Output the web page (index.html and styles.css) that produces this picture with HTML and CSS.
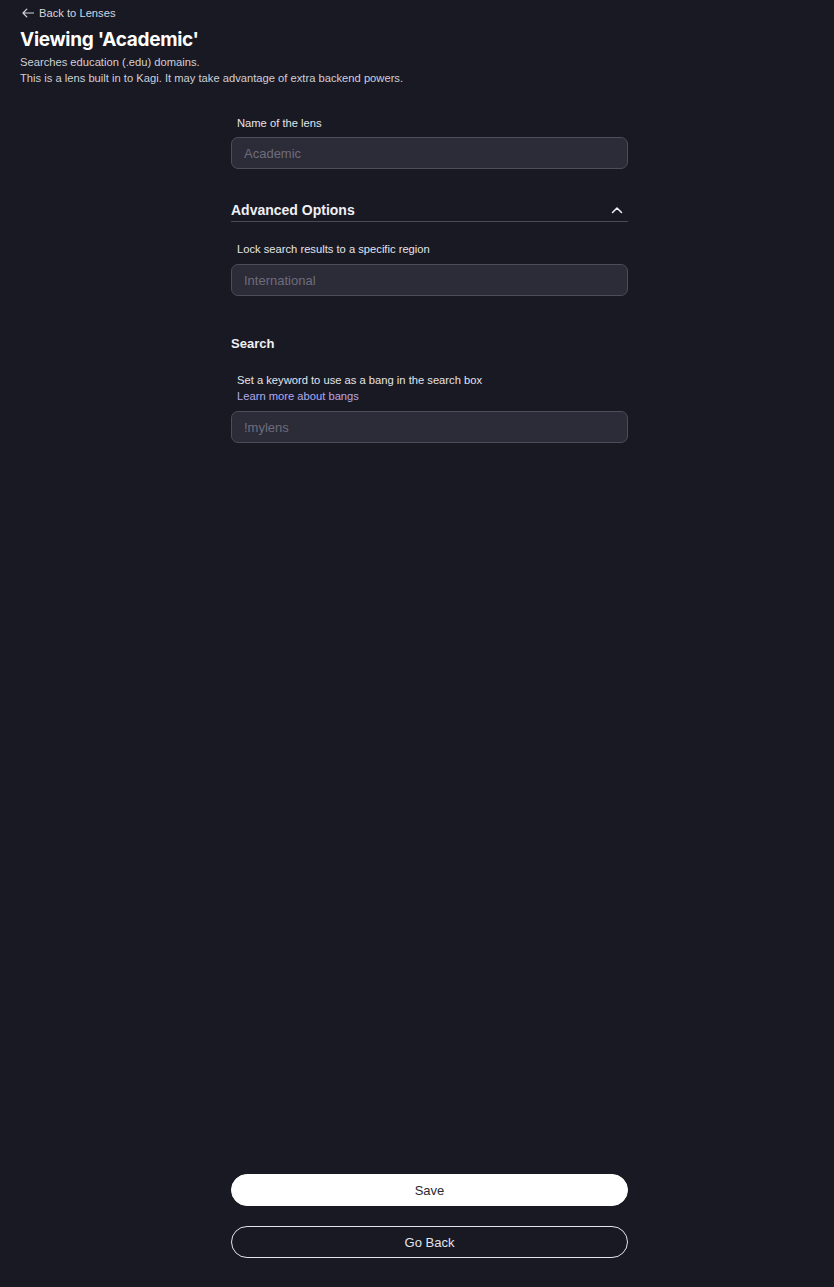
FILE: index.html
```html
<!DOCTYPE html>
<html>
<head>
    <meta charset="utf-8">
    <title>Viewing 'Academic'</title>
    <link rel="stylesheet" href="styles.css">
</head>
<body>
    <div class="page">
        <header class="top">
            <a class="back" href="#">
                <svg width="12" height="10" viewBox="0 0 12 10"><path d="M11.5 5H1M4.8 1.2L1 5L4.8 8.8" fill="none" stroke="#d6d6de" stroke-width="1.2" stroke-linecap="round" stroke-linejoin="round"/></svg>
                Back to Lenses
            </a>
            <h1 class="title">Viewing 'Academic'</h1>
            <p class="desc">Searches education (.edu) domains.</p>
            <p class="desc">This is a lens built in to Kagi. It may take advantage of extra backend powers.</p>
        </header>
        <form class="form">
            <section class="field">
                <label class="field_label">Name of the lens</label>
                <input class="field_input" type="text" placeholder="Academic">
            </section>
            <section class="group">
                <div class="group_head">
                    <span>Advanced Options</span>
                    <svg width="12" height="8" viewBox="0 0 12 8"><path d="M1.5 6.5L6 2L10.5 6.5" fill="none" stroke="#f0f0f4" stroke-width="1.5" stroke-linecap="round" stroke-linejoin="round"/></svg>
                </div>
                <div class="field">
                    <label class="field_label">Lock search results to a specific region</label>
                    <input class="field_input" type="text" placeholder="International">
                </div>
            </section>
            <section class="group">
                <h2 class="group_title">Search</h2>
                <div class="field">
                    <label class="field_label">Set a keyword to use as a bang in the search box<br><a class="link" href="#">Learn more about bangs</a></label>
                    <input class="field_input" type="text" placeholder="!mylens">
                </div>
            </section>
            <div class="actions">
                <button type="button" class="btn btn_save">Save</button>
                <button type="button" class="btn btn_back">Go Back</button>
            </div>
        </form>
    </div>
</body>
</html>
```

FILE: styles.css
```css
*{
    box-sizing: border-box;
    padding: 0;
    margin: 0;
}
body{
    background: #191923;
    color: #e4e4ea;
    font-family: "Liberation Sans", Arial, sans-serif;
}
.page{
    display: flex;
    flex-direction: column;
    min-height: 100vh;
}
.top{
    padding: 5px 20px 0;
}
.back{
    display: flex;
    align-items: center;
    gap: 5px;
    font-size: 11.2px;
    line-height: 16px;
    color: #d6d6de;
    text-decoration: none;
    padding-left: 2px;
}
.title{
    font-family: Inter, "Noto Sans", sans-serif;
    font-size: 19px;
    font-weight: 700;
    letter-spacing: -0.3px;
    line-height: 24px;
    margin: 7px 0 2px;
    color: #ffffff;
}
.desc{
    font-size: 11.2px;
    line-height: 16px;
    color: #cfcfd7;
}
.form{
    flex: 1;
    display: flex;
    flex-direction: column;
    width: 397px;
    margin: 29px 0 0 231px;
}
.field{
    display: flex;
    flex-direction: column;
    gap: 6px;
}
.group .field{
    gap: 7px;
}
.field_label{
    font-size: 11.2px;
    line-height: 16px;
    padding-left: 6px;
    color: #e4e4ea;
}
.field_input{
    height: 32px;
    background: #2c2b38;
    border: 1px solid #4d4c5a;
    border-radius: 7px;
    padding: 0 12px;
    font-family: "Liberation Sans", Arial, sans-serif;
    font-size: 13px;
    color: #e4e4ea;
    outline: none;
}
.field_input::placeholder{
    color: #6e6d7b;
}
.group{
    margin-top: 31px;
}
.group_head{
    display: flex;
    justify-content: space-between;
    align-items: center;
    height: 22px;
    padding: 0 5px 2px 0;
    border-bottom: 1px solid #4a4956;
    font-size: 14px;
    font-weight: 700;
    color: #f0f0f4;
    margin-bottom: 19px;
}
.group + .group{
    margin-top: 40px;
}
.group_title{
    font-size: 13px;
    font-weight: 700;
    line-height: 16px;
    color: #f0f0f4;
    margin-bottom: 20px;
}
.link{
    color: #b3a8ec;
    text-decoration: none;
}
.actions{
    margin-top: auto;
    display: flex;
    flex-direction: column;
    gap: 20px;
    padding-bottom: 29px;
}
.btn{
    height: 32px;
    border-radius: 16px;
    font-family: "Liberation Sans", Arial, sans-serif;
    font-size: 13px;
}
.btn_save{
    background: #ffffff;
    border: 1px solid #ffffff;
    color: #2a2a33;
}
.btn_back{
    background: transparent;
    border: 1px solid #e4e4ea;
    color: #e4e4ea;
}
```
